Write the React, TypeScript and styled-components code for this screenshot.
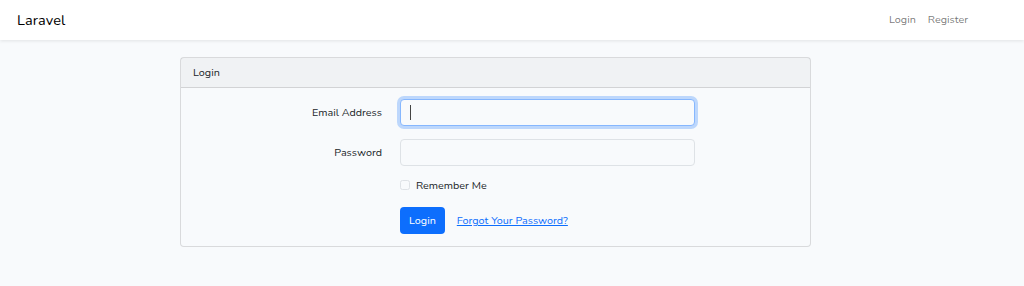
import styled, { createGlobalStyle } from 'styled-components';

const GlobalStyle = createGlobalStyle`
    html, body {
        margin: 0;
        padding: 0;
        background: #f8fafc;
        font-family: "Nunito", "Lato", "Noto Sans", sans-serif;
        color: #212529;
    }
`;

const Navbar = styled.nav`
    height: 40px;
    background: #fff;
    box-shadow: 0 1.5px 3px rgba(0, 0, 0, 0.075);
    display: flex;
    align-items: center;
    justify-content: space-between;
    padding: 0 56px 1px 17px;
    box-sizing: border-box;
`;

const Brand = styled.a`
    font-size: 14.5px;
    color: #000;
    text-decoration: none;
    letter-spacing: 0.1px;
`;

const NavLinks = styled.div`
    display: flex;
    gap: 12px;
`;

const NavLink = styled.a`
    font-size: 10.8px;
    color: rgba(0, 0, 0, 0.55);
    text-decoration: none;
`;

const Main = styled.main`
    display: flex;
    padding: 17px 0 0 180px;
`;

const Card = styled.div`
    width: 631px;
    border: 1px solid rgba(0, 0, 0, 0.125);
    border-radius: 4px;
    background: #f8fafc;
    box-sizing: border-box;
`;

const CardHeader = styled.div`
    height: 29px;
    display: flex;
    align-items: center;
    padding: 0 12px;
    font-size: 10.8px;
    background: rgba(0, 0, 0, 0.03);
    border-bottom: 1px solid rgba(0, 0, 0, 0.125);
`;

const CardBody = styled.div`
    padding: 11px 0 12px;
`;

const FormRow = styled.div<{ $gap?: number }>`
    display: grid;
    grid-template-columns: 201px 295px;
    column-gap: 18px;
    align-items: center;
    margin-bottom: ${(p) => p.$gap ?? 0}px;
`;

const Label = styled.label`
    text-align: right;
    font-size: 10.8px;
    color: #212529;
`;

const InputWrap = styled.div`
    position: relative;
`;

const Input = styled.input<{ $focused?: boolean }>`
    display: block;
    width: 100%;
    height: 27px;
    box-sizing: border-box;
    background: #f8fafc;
    border: 1px solid ${(p) => (p.$focused ? '#86b7fe' : '#dee2e6')};
    border-radius: 4px;
    outline: none;
    box-shadow: ${(p) => (p.$focused ? '0 0 0 3px rgba(13, 110, 253, 0.25)' : 'none')};
    font-family: inherit;
    font-size: 11px;
    padding: 0 9px;
`;

const Caret = styled.span`
    position: absolute;
    left: 10px;
    top: 6px;
    width: 1px;
    height: 15px;
    background: #444;
`;

const CheckLine = styled.label`
    display: flex;
    align-items: center;
    gap: 6px;
    font-size: 10.8px;
    height: 16px;
`;

const Checkbox = styled.span`
    width: 10px;
    height: 10px;
    border: 1px solid #dee2e6;
    border-radius: 2.5px;
    box-sizing: border-box;
    background: #f8fafc;
`;

const Actions = styled.div`
    display: flex;
    align-items: center;
    gap: 12px;
`;

const Button = styled.button`
    height: 27px;
    padding: 0 9px;
    background: #0d6efd;
    color: #fff;
    border: none;
    border-radius: 4px;
    font-family: inherit;
    font-size: 10.8px;
`;

const Link = styled.a`
    color: #0d6efd;
    font-size: 10.8px;
    text-decoration: underline;
`;

export default function App() {
    return (
        <>
            <GlobalStyle />
            <Navbar>
                <Brand href="#">Laravel</Brand>
                <NavLinks>
                    <NavLink href="#">Login</NavLink>
                    <NavLink href="#">Register</NavLink>
                </NavLinks>
            </Navbar>
            <Main>
                <Card>
                    <CardHeader>Login</CardHeader>
                    <CardBody>
                        <FormRow $gap={13}>
                            <Label htmlFor="email">Email Address</Label>
                            <InputWrap>
                                <Input id="email" type="email" $focused />
                                <Caret />
                            </InputWrap>
                        </FormRow>
                        <FormRow $gap={11}>
                            <Label htmlFor="password">Password</Label>
                            <Input id="password" type="password" />
                        </FormRow>
                        <FormRow $gap={14}>
                            <span />
                            <CheckLine>
                                <Checkbox />
                                Remember Me
                            </CheckLine>
                        </FormRow>
                        <FormRow>
                            <span />
                            <Actions>
                                <Button>Login</Button>
                                <Link href="#">Forgot Your Password?</Link>
                            </Actions>
                        </FormRow>
                    </CardBody>
                </Card>
            </Main>
        </>
    );
}
